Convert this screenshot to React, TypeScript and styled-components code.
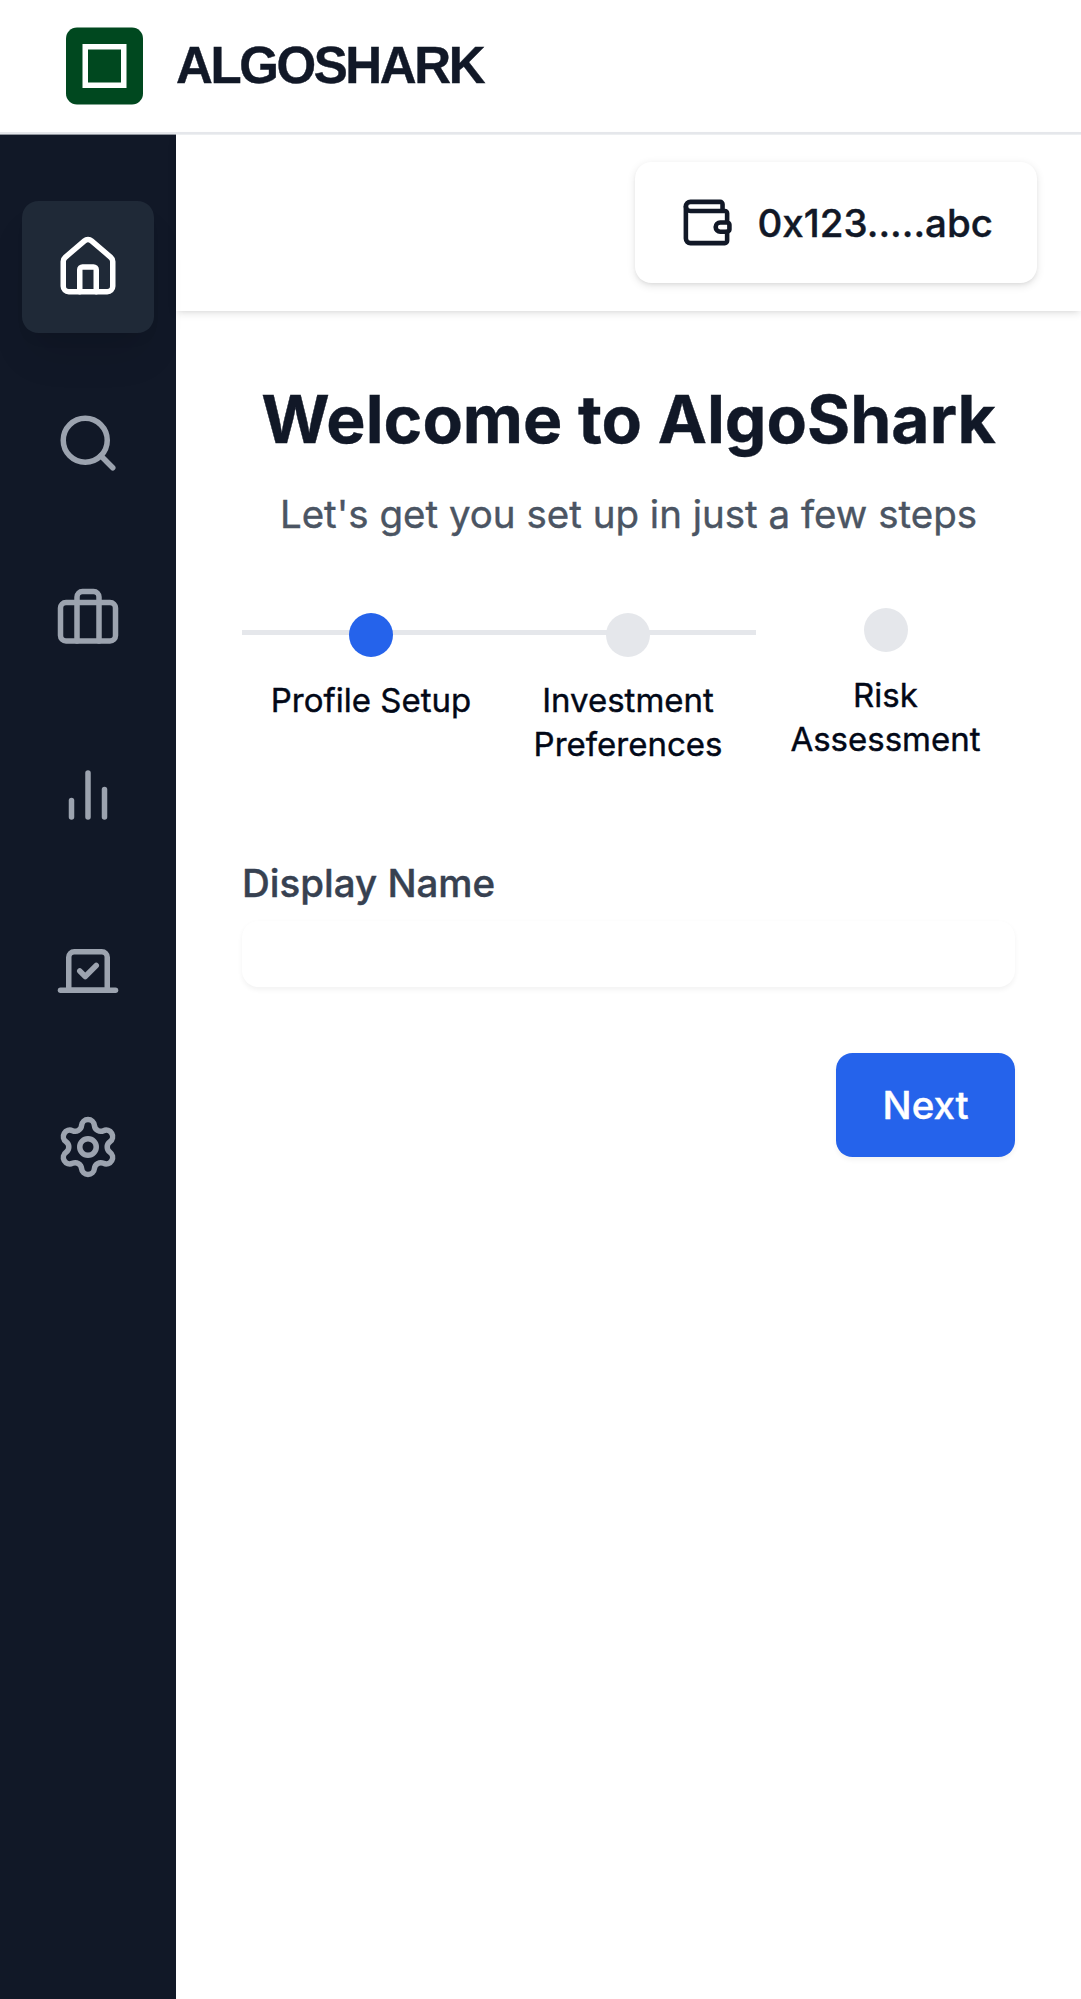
import React from "react";
import styled, { createGlobalStyle, css } from "styled-components";
import { House, Search, Briefcase, Vote, Settings, Wallet } from "lucide-react";

/* One layout unit is 2.75 screen pixels. */
const u = (n: number) => `${n * 2.75}px`;

const GlobalStyle = createGlobalStyle`
  *, *::before, *::after { box-sizing: border-box; }
  body {
    margin: 0;
    background: #ffffff;
    color: #020817;
    font-family: Inter, "Liberation Sans", sans-serif;
    font-size: ${u(14)};
    line-height: ${u(20)};
    -webkit-text-stroke: 0.4px currentColor;
  }
  button, input { font: inherit; }
`;

const Page = styled.div`
  display: flex;
  flex-direction: column;
  height: 1999px;
  overflow: hidden;
`;

const Header = styled.header`
  position: relative;
  z-index: 1;
  display: flex;
  align-items: center;
  flex: none;
  gap: ${u(12)};
  height: 134px;
  padding: 0 ${u(24)};
  border-bottom: 2px solid #e5e7eb;
  box-shadow: 0 1px 0 rgba(229, 231, 235, 0.6);
`;

const Logo = styled.svg`
  display: block;
  width: 77px;
  height: 78px;
`;

const Brand = styled.span`
  padding-bottom: 2px;
  font-family: "Liberation Sans", Arial, sans-serif;
  font-size: 51px;
  font-weight: 700;
  letter-spacing: -2.4px;
  color: #111827;
  -webkit-text-stroke: 0.4px currentColor;
`;

const Body = styled.div`
  display: flex;
  flex: 1;
  min-height: 0;
`;

const Sidebar = styled.nav`
  display: flex;
  flex-direction: column;
  align-items: center;
  flex: none;
  gap: ${u(16)};
  width: ${u(64)};
  padding-top: 66.75px;
  background: #111827;
`;

const NavButton = styled.button<{ $active?: boolean }>`
  display: flex;
  align-items: center;
  justify-content: center;
  flex: none;
  width: ${u(48)};
  height: ${u(48)};
  padding: 0;
  border: 0;
  border-radius: ${u(6)};
  background: transparent;
  color: #9ca3af;
  ${(p) =>
    p.$active &&
    css`
      background: #1f2937;
      color: #ffffff;
      box-shadow: 0 ${u(10)} ${u(15)} ${u(-3)} rgba(0, 0, 0, 0.1),
        0 ${u(4)} ${u(6)} ${u(-4)} rgba(0, 0, 0, 0.1);
    `}
`;

const Main = styled.div`
  display: flex;
  flex-direction: column;
  flex: 1;
  min-width: 0;
  padding-top: 0.75px;
`;

const TopBar = styled.div`
  display: flex;
  align-items: center;
  justify-content: flex-end;
  flex: none;
  height: ${u(64)};
  padding-right: ${u(16)};
  box-shadow: 0 ${u(1)} ${u(3)} rgba(0, 0, 0, 0.1),
    0 ${u(1)} ${u(2)} ${u(-1)} rgba(0, 0, 0, 0.1);
`;

const WalletButton = styled.button`
  display: flex;
  align-items: center;
  gap: 23px;
  height: ${u(44)};
  padding: 0 ${u(16)};
  border: 0;
  border-radius: ${u(6)};
  background: #ffffff;
  color: #111827;
  font-weight: 500;
  box-shadow: 0 ${u(1)} ${u(3)} rgba(0, 0, 0, 0.1),
    0 ${u(1)} ${u(2)} ${u(-1)} rgba(0, 0, 0, 0.1);
`;

const Address = styled.span`
  padding-top: 2px;
`;

const Content = styled.main`
  display: flex;
  flex-direction: column;
  padding: ${u(24)};
`;

const Title = styled.h1`
  margin: 0;
  font-size: ${u(24)};
  line-height: 85px;
  font-weight: 700;
  text-align: center;
  white-space: nowrap;
  color: #111827;
`;

const Subtitle = styled.p`
  margin: 25px 0 0;
  text-align: center;
  color: #4b5563;
`;

const Steps = styled.ol`
  display: grid;
  grid-template-columns: 258px 256px 1fr;
  margin: ${u(32)} 0 0;
  padding: 0;
  list-style: none;
`;

const Step = styled.li<{ $line: boolean }>`
  display: flex;
  flex-direction: column;
  align-items: center;
  border-top: ${(p) => (p.$line ? "5px solid #e5e7eb" : "0")};
`;

const Dot = styled.span<{ $active: boolean }>`
  width: ${u(16)};
  height: ${u(16)};
  margin-top: ${u(-8)};
  border-radius: 50%;
  background: ${(p) => (p.$active ? "#2563eb" : "#e5e7eb")};
`;

const StepLabel = styled.span`
  margin-top: 21px;
  padding: 0 ${u(8)};
  font-size: ${u(12)};
  line-height: ${u(16)};
  text-align: center;
`;

const Form = styled.form`
  display: flex;
  flex-direction: column;
  margin-top: 90px;
`;

const Label = styled.label`
  font-weight: 500;
  color: #374151;
`;

const Input = styled.input`
  width: 100%;
  height: ${u(24)};
  margin-top: 10px;
  padding: 0;
  border: 0;
  outline: 0;
  border-radius: ${u(6)};
  background: #ffffff;
  box-shadow: 0 ${u(1)} ${u(2)} rgba(0, 0, 0, 0.05);
`;

const NextButton = styled.button`
  align-self: flex-end;
  width: ${u(65)};
  height: ${u(38)};
  margin-top: ${u(24)};
  padding: 0;
  border: 0;
  border-radius: ${u(6)};
  background: #2563eb;
  color: #ffffff;
  font-weight: 500;
  box-shadow: 0 ${u(1)} ${u(2)} rgba(0, 0, 0, 0.05);
`;

function Bars({ size }: { size: number }) {
  return (
    <svg
      width={size}
      height={size}
      viewBox="0 0 24 24"
      fill="none"
      stroke="currentColor"
      strokeWidth="2"
      strokeLinecap="round"
      strokeLinejoin="round"
    >
      <path d="M18 20V10" />
      <path d="M12 20V4" />
      <path d="M6 20v-6" />
    </svg>
  );
}

const navItems = [
  { name: "Home", Icon: House },
  { name: "Search", Icon: Search },
  { name: "Portfolio", Icon: Briefcase },
  { name: "Analytics", Icon: Bars },
  { name: "Governance", Icon: Vote },
  { name: "Settings", Icon: Settings },
];

const steps = ["Profile Setup", "Investment Preferences", "Risk Assessment"];

export default function App() {
  return (
    <>
      <GlobalStyle />
      <Page>
        <Header>
          <Logo viewBox="0 0 77 78">
            <rect y="0.5" width="77" height="77" rx="11" fill="#00481f" />
            <rect x="19.25" y="19.75" width="38.5" height="38.5" fill="none" stroke="#ffffff" strokeWidth="5.5" />
          </Logo>
          <Brand>ALGOSHARK</Brand>
        </Header>
        <Body>
          <Sidebar>
            {navItems.map(({ name, Icon }, i) => (
              <NavButton key={name} $active={i === 0} aria-label={name}>
                <Icon size={66} />
              </NavButton>
            ))}
          </Sidebar>
          <Main>
            <TopBar>
              <WalletButton>
                <Wallet size={55} />
                <Address>0x123.....abc</Address>
              </WalletButton>
            </TopBar>
            <Content>
              <Title>Welcome to AlgoShark</Title>
              <Subtitle>Let's get you set up in just a few steps</Subtitle>
              <Steps>
                {steps.map((label, i) => (
                  <Step key={label} $line={i < steps.length - 1}>
                    <Dot $active={i === 0} />
                    <StepLabel>{label}</StepLabel>
                  </Step>
                ))}
              </Steps>
              <Form>
                <Label htmlFor="display-name">Display Name</Label>
                <Input id="display-name" type="text" />
                <NextButton type="button">Next</NextButton>
              </Form>
            </Content>
          </Main>
        </Body>
      </Page>
    </>
  );
}
